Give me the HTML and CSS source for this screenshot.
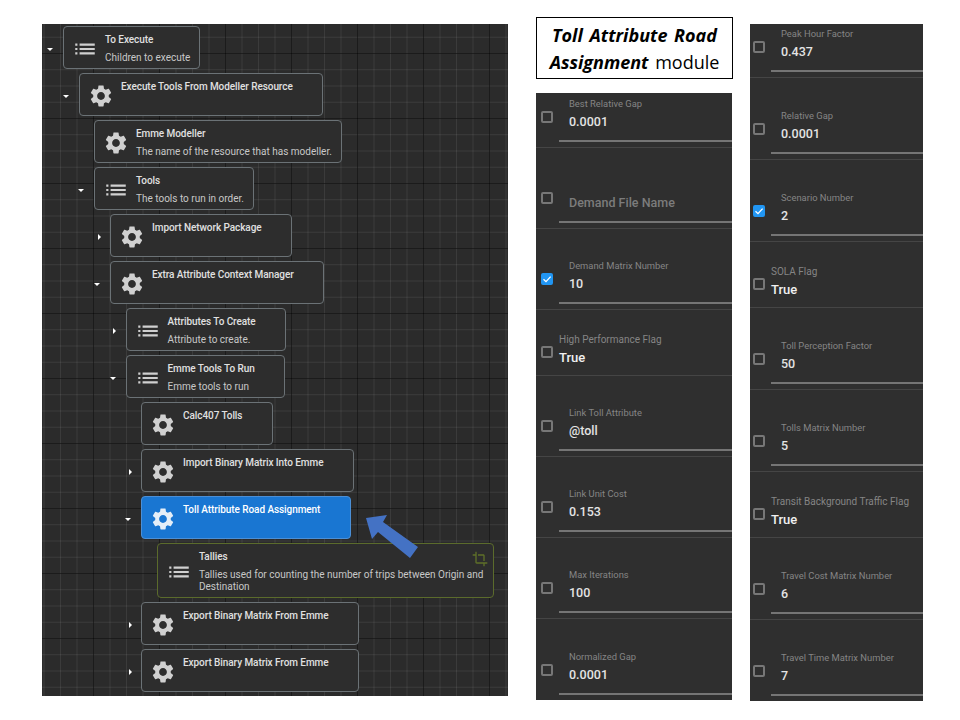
FILE: index.html
```html
<!DOCTYPE html>
<html lang="en">
<head>
    <meta charset="UTF-8">
    <title>Toll Attribute Road Assignment module</title>
    <link rel="stylesheet" href="styles.css">
</head>
<body>
    <svg class="icon-defs" aria-hidden="true">
        <symbol id="gear" viewBox="0 0 24 24"><path d="M19.14 12.94c.04-.3.06-.61.06-.94 0-.32-.02-.64-.07-.94l2.03-1.58c.18-.14.23-.41.12-.61l-1.92-3.32c-.12-.22-.37-.29-.59-.22l-2.39.96c-.5-.38-1.03-.7-1.62-.94l-.36-2.54c-.04-.24-.24-.41-.48-.41h-3.84c-.24 0-.43.17-.47.41l-.36 2.54c-.59.24-1.13.57-1.62.94l-2.39-.96c-.22-.08-.47 0-.59.22L2.74 8.87c-.12.21-.08.47.12.61l2.03 1.58c-.05.3-.09.63-.09.94s.02.64.07.94l-2.03 1.58c-.18.14-.23.41-.12.61l1.92 3.32c.12.22.37.29.59.22l2.39-.96c.5.38 1.03.7 1.62.94l.36 2.54c.05.24.24.41.48.41h3.84c.24 0 .44-.17.47-.41l.36-2.54c.59-.24 1.13-.56 1.62-.94l2.39.96c.22.08.47 0 .59-.22l1.92-3.32c.12-.22.07-.47-.12-.61l-2.01-1.58zM12 15.6c-1.98 0-3.6-1.62-3.6-3.6s1.62-3.6 3.6-3.6 3.6 1.62 3.6 3.6-1.62 3.6-3.6 3.6z"/></symbol>
        <symbol id="list" viewBox="0 0 24 24"><path d="M3 13h2v-2H3v2zm0 4h2v-2H3v2zm0-8h2V7H3v2zm4 4h14v-2H7v2zm0 4h14v-2H7v2zM7 7v2h14V7H7z"/></symbol>
    </svg>

    <main class="page">
        <section class="tree">
            <div class="row depth-0">
                <span class="toggle open"></span>
                <div class="node">
                    <svg class="node-icon"><use href="#list"/></svg>
                    <div><div class="node-title">To Execute</div><div class="node-desc">Children to execute</div></div>
                </div>
            </div>
            <div class="row depth-1">
                <span class="toggle open"></span>
                <div class="node">
                    <svg class="node-icon"><use href="#gear"/></svg>
                    <div><div class="node-title">Execute Tools From Modeller Resource</div></div>
                </div>
            </div>
            <div class="row depth-2">
                <span class="toggle"></span>
                <div class="node">
                    <svg class="node-icon"><use href="#gear"/></svg>
                    <div><div class="node-title">Emme Modeller</div><div class="node-desc">The name of the resource that has modeller.</div></div>
                </div>
            </div>
            <div class="row depth-2">
                <span class="toggle open"></span>
                <div class="node">
                    <svg class="node-icon"><use href="#list"/></svg>
                    <div><div class="node-title">Tools</div><div class="node-desc">The tools to run in order.</div></div>
                </div>
            </div>
            <div class="row depth-3">
                <span class="toggle closed"></span>
                <div class="node">
                    <svg class="node-icon"><use href="#gear"/></svg>
                    <div><div class="node-title">Import Network Package</div></div>
                </div>
            </div>
            <div class="row depth-3">
                <span class="toggle open"></span>
                <div class="node">
                    <svg class="node-icon"><use href="#gear"/></svg>
                    <div><div class="node-title">Extra Attribute Context Manager</div></div>
                </div>
            </div>
            <div class="row depth-4">
                <span class="toggle closed"></span>
                <div class="node">
                    <svg class="node-icon"><use href="#list"/></svg>
                    <div><div class="node-title">Attributes To Create</div><div class="node-desc">Attribute to create.</div></div>
                </div>
            </div>
            <div class="row depth-4">
                <span class="toggle open"></span>
                <div class="node">
                    <svg class="node-icon"><use href="#list"/></svg>
                    <div><div class="node-title">Emme Tools To Run</div><div class="node-desc">Emme tools to run</div></div>
                </div>
            </div>
            <div class="row depth-5">
                <span class="toggle"></span>
                <div class="node">
                    <svg class="node-icon"><use href="#gear"/></svg>
                    <div><div class="node-title">Calc407 Tolls</div></div>
                </div>
            </div>
            <div class="row depth-5">
                <span class="toggle closed"></span>
                <div class="node">
                    <svg class="node-icon"><use href="#gear"/></svg>
                    <div><div class="node-title">Import Binary Matrix Into Emme</div></div>
                </div>
            </div>
            <div class="row depth-5">
                <span class="toggle open"></span>
                <div class="node selected">
                    <svg class="node-icon"><use href="#gear"/></svg>
                    <div><div class="node-title">Toll Attribute Road Assignment</div></div>
                </div>
            </div>
            <div class="row depth-6">
                <span class="toggle"></span>
                <div class="node tallies">
                    <svg class="node-icon"><use href="#list"/></svg>
                    <div><div class="node-title">Tallies</div><div class="node-desc">Tallies used for counting the number of trips between Origin and Destination</div></div>
                    <svg class="crop-icon" viewBox="0 0 24 24"><path d="M17 15h2V7c0-1.1-.9-2-2-2H9v2h8v8zM7 17V1H5v4H1v2h4v10c0 1.1.9 2 2 2h10v4h2v-4h4v-2H7z"/></svg>
                </div>
            </div>
            <div class="row depth-5">
                <span class="toggle closed"></span>
                <div class="node">
                    <svg class="node-icon"><use href="#gear"/></svg>
                    <div><div class="node-title">Export Binary Matrix From Emme</div></div>
                </div>
            </div>
            <div class="row depth-5">
                <span class="toggle closed"></span>
                <div class="node">
                    <svg class="node-icon"><use href="#gear"/></svg>
                    <div><div class="node-title">Export Binary Matrix From Emme</div></div>
                </div>
            </div>

            <svg class="arrow" viewBox="0 0 62 54"><polygon points="4,9 25,6 21,13 56,38 48,49 16,23 10,30"/></svg>
        </section>

        <div class="middle">
            <h1 class="module-title">
                <span class="title-line"><b>Toll Attribute Road</b></span>
                <span class="title-line"><b>Assignment</b> module</span>
            </h1>
            <section class="panel panel-left">
                <div class="field first">
                    <span class="check"></span>
                    <div class="input"><div class="input-label">Best Relative Gap</div><div class="input-value">0.0001</div></div>
                </div>
                <div class="field">
                    <span class="check"></span>
                    <div class="input"><div class="input-label"></div><div class="input-value placeholder">Demand File Name</div></div>
                </div>
                <div class="field">
                    <span class="check checked"><svg viewBox="0 0 12 12"><path d="M2.5 6.2 5 8.6 9.6 3.6"/></svg></span>
                    <div class="input"><div class="input-label">Demand Matrix Number</div><div class="input-value">10</div></div>
                </div>
                <div class="field flag">
                    <span class="check"></span>
                    <div class="input"><div class="input-label">High Performance Flag</div><div class="input-value">True</div></div>
                </div>
                <div class="field">
                    <span class="check"></span>
                    <div class="input"><div class="input-label">Link Toll Attribute</div><div class="input-value">@toll</div></div>
                </div>
                <div class="field">
                    <span class="check"></span>
                    <div class="input"><div class="input-label">Link Unit Cost</div><div class="input-value">0.153</div></div>
                </div>
                <div class="field">
                    <span class="check"></span>
                    <div class="input"><div class="input-label">Max Iterations</div><div class="input-value">100</div></div>
                </div>
                <div class="field">
                    <span class="check"></span>
                    <div class="input"><div class="input-label">Normalized Gap</div><div class="input-value">0.0001</div></div>
                </div>
            </section>
        </div>

        <section class="panel panel-right">
            <div class="field first">
                <span class="check"></span>
                <div class="input"><div class="input-label">Peak Hour Factor</div><div class="input-value">0.437</div></div>
            </div>
            <div class="field">
                <span class="check"></span>
                <div class="input"><div class="input-label">Relative Gap</div><div class="input-value">0.0001</div></div>
            </div>
            <div class="field">
                <span class="check checked"><svg viewBox="0 0 12 12"><path d="M2.5 6.2 5 8.6 9.6 3.6"/></svg></span>
                <div class="input"><div class="input-label">Scenario Number</div><div class="input-value">2</div></div>
            </div>
            <div class="field flag">
                <span class="check"></span>
                <div class="input"><div class="input-label">SOLA Flag</div><div class="input-value">True</div></div>
            </div>
            <div class="field">
                <span class="check"></span>
                <div class="input"><div class="input-label">Toll Perception Factor</div><div class="input-value">50</div></div>
            </div>
            <div class="field">
                <span class="check"></span>
                <div class="input"><div class="input-label">Tolls Matrix Number</div><div class="input-value">5</div></div>
            </div>
            <div class="field flag">
                <span class="check"></span>
                <div class="input"><div class="input-label">Transit Background Traffic Flag</div><div class="input-value">True</div></div>
            </div>
            <div class="field">
                <span class="check"></span>
                <div class="input"><div class="input-label">Travel Cost Matrix Number</div><div class="input-value">6</div></div>
            </div>
            <div class="field">
                <span class="check"></span>
                <div class="input"><div class="input-label">Travel Time Matrix Number</div><div class="input-value">7</div></div>
            </div>
        </section>
    </main>
</body>
</html>
```

FILE: styles.css
```css
body {
    margin: 0;
    background-color: #fff;
    font-family: Roboto, "Liberation Sans", sans-serif;
}

.icon-defs {
    display: none;
}

.page {
    display: grid;
    grid-template-columns: 477px 197px 173px;
    column-gap: 17px;
    align-items: start;
    padding: 17px 0 0 42px;
    box-sizing: border-box;
    height: 720px;
}

/* tree on the left */

.tree {
    position: relative;
    margin-top: 7px;
    width: 466px;
    height: 672px;
    padding-top: 2px;
    box-sizing: border-box;
    display: flex;
    flex-direction: column;
    gap: 4px;
    background-color: #2b2b2b;
    background-image:
        linear-gradient(to right, rgba(0, 0, 0, 0.55) 1px, transparent 1px),
        linear-gradient(to bottom, rgba(0, 0, 0, 0.55) 1px, transparent 1px),
        linear-gradient(to right, rgba(255, 255, 255, 0.08) 1px, transparent 1px),
        linear-gradient(to bottom, rgba(255, 255, 255, 0.08) 1px, transparent 1px);
    background-size: 66px 65px, 66px 65px, 16.5px 16.25px, 16.5px 16.25px;
    background-position: 51px 0, 0 29px, 1.5px 0, 0 12.75px;
}

.row {
    display: flex;
    align-items: center;
}

.depth-0 { padding-left: 7px; }
.depth-1 { padding-left: 23px; }
.depth-2 { padding-left: 38px; }
.depth-3 { padding-left: 54px; }
.depth-4 { padding-left: 69.5px; }
.depth-5 { padding-left: 85px; }
.depth-6 { padding-left: 101px; }

.toggle {
    flex: none;
    width: 14px;
    height: 6px;
    margin-top: 3px;
    display: flex;
    align-items: center;
    justify-content: center;
}

.toggle.open::before {
    content: "";
    margin-right: 12px;
    border-top: 3px solid #fff;
    border-left: 3px solid transparent;
    border-right: 3px solid transparent;
}

.toggle.closed::before {
    content: "";
    margin-right: 8px;
    border-left: 3px solid #fff;
    border-top: 3px solid transparent;
    border-bottom: 3px solid transparent;
}

.node {
    position: relative;
    display: flex;
    align-items: flex-start;
    min-height: 43px;
    box-sizing: border-box;
    padding: 7px 9px 4px 8px;
    background-color: #2d2d2d;
    border: 1px solid #6b7276;
    border-radius: 4px;
    color: #e0e0e0;
}

.node-icon {
    flex: none;
    align-self: center;
    width: 26px;
    height: 26px;
    margin-right: 7px;
    fill: #d0d0d0;
}

.node-title {
    font-size: 10px;
    font-weight: 500;
    line-height: 12px;
    padding-right: 20.5px;
    letter-spacing: -0.07px;
}

.node-desc {
    margin-top: 6px;
    font-size: 10px;
    line-height: 12px;
    color: #c8c8c8;
}

.node.selected {
    background-color: #1976d2;
    border-color: #4b8fd6;
    color: #fff;
}

.node.selected .node-icon {
    fill: #e4eef8;
}

.node.tallies {
    width: 337px;
    border-color: #5b6b2c;
}

.crop-icon {
    position: absolute;
    top: 7px;
    right: 5px;
    width: 16px;
    height: 16px;
    fill: #5f7029;
}

.arrow {
    position: absolute;
    left: 320px;
    top: 485px;
    width: 62px;
    height: 54px;
    fill: #4472c4;
}

/* title box */

.middle {
    display: flex;
    flex-direction: column;
    gap: 14px;
}

.module-title {
    margin: 0;
    height: 62px;
    box-sizing: border-box;
    padding-top: 4px;
    border: 1px solid #000;
    font-family: "Open Sans", sans-serif;
    font-size: 18px;
    font-weight: 400;
    line-height: 26.5px;
    word-spacing: 2px;
    text-align: center;
    color: #000;
}

.title-line {
    display: block;
}

.module-title b {
    font-weight: 700;
    font-style: italic;
}

/* option panels */

.panel {
    background-color: #2f2f2f;
    color: #e4e4e4;
}

.panel-left {
    width: 196px;
    --row: 81px;
    --first-row: 55px;
    --check-left: 5px;
}

.panel-right {
    margin-top: 7px;
    --row: 82px;
    --first-row: 54px;
    --check-left: 3px;
}

.field {
    display: flex;
    align-items: flex-end;
    height: var(--row);
    box-sizing: border-box;
    padding-left: var(--check-left);
    border-bottom: 1px solid #454545;
}

.field.first {
    height: var(--first-row);
}

.field.flag {
    height: 66px;
}

.field:last-child {
    height: 81px;
    border-bottom: none;
}

.check {
    flex: none;
    width: 12px;
    height: 12px;
    box-sizing: border-box;
    margin-bottom: 24px;
    border: 2px solid #777;
    border-radius: 2px;
}

.check.checked {
    background-color: #2196f3;
    border-color: #2196f3;
}

.check svg {
    display: block;
    width: 12px;
    height: 12px;
    margin: -2px;
    fill: none;
    stroke: #fff;
    stroke-width: 1.3;
}

.input {
    flex: 1;
    margin: 0 0 5px 6px;
    padding: 0 0 7px 10px;
    border-bottom: 2px solid #757575;
}

.input-label {
    height: 14px;
    font-size: 9.4px;
    line-height: 14px;
    color: #858585;
    white-space: nowrap;
}

.input-value {
    font-size: 12.5px;
    font-weight: 500;
    line-height: 22px;
}

.placeholder {
    color: #7c7c7c;
}

.flag .check {
    margin-bottom: 17px;
}

.flag .input {
    margin-bottom: 6px;
    padding: 0;
    border-bottom: none;
}

.flag .input-label {
    font-size: 10px;
}

.flag .input-value {
    font-size: 13px;
    color: #f0f0f0;
}
```
